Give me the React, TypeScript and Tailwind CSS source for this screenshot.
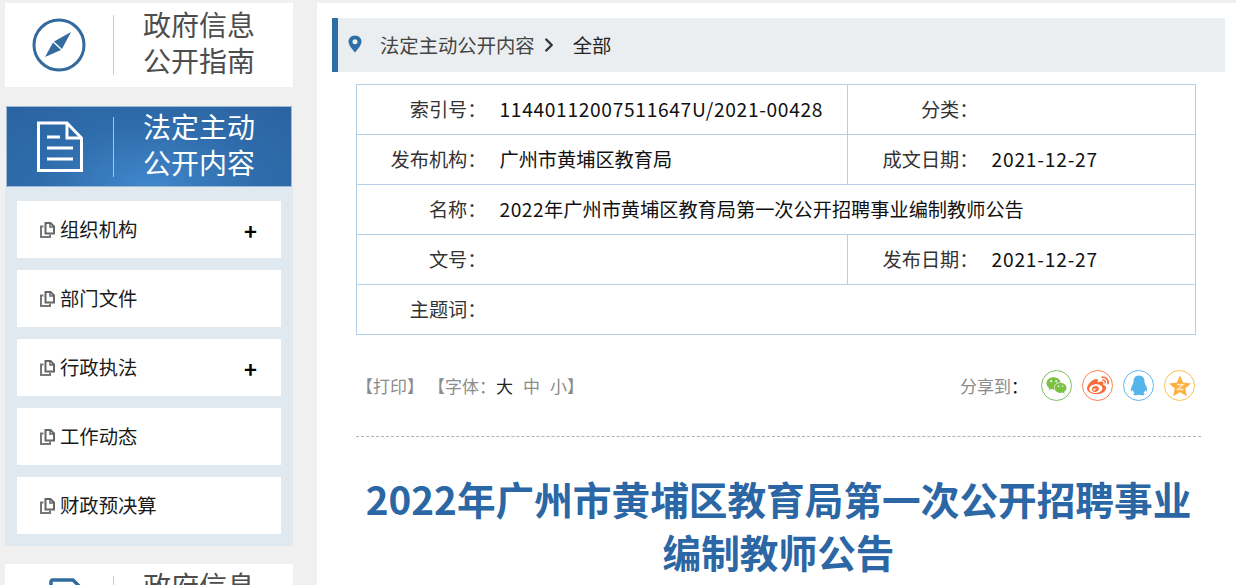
import { ChevronRight } from "lucide-react";
import { FaWeibo, FaWeixin } from "react-icons/fa";

const menu = [
  { name: "组织机构", plus: true },
  { name: "部门文件", plus: false },
  { name: "行政执法", plus: true },
  { name: "工作动态", plus: false },
  { name: "财政预决算", plus: false },
];

function CompassIcon() {
  return (
    <svg width="54" height="54" viewBox="0 0 54 54" fill="none">
      <circle cx="27" cy="27" r="25" stroke="#336b9e" strokeWidth="3" />
      <path d="M39 14 L30 31 L22 23.500 Z" fill="#336b9e" />
      <path d="M21 24.500 L29 32 L13 39 Z" fill="#336b9e" />
    </svg>
  );
}

function DocIcon() {
  return (
    <svg width="46" height="52" viewBox="0 0 46 52" fill="none" stroke="#fff" strokeWidth="3">
      <path d="M1.500 2 H30 L44.500 17 V49.500 H1.500 Z" />
      <path d="M30 2 V17 H44.500" />
      <path d="M10 16 H23 M10 27 H36 M10 38 H36" />
    </svg>
  );
}

function CatalogIcon() {
  return (
    <svg className="ml-[16px]" width="36" height="56" viewBox="0 0 36 56" fill="none" stroke="#336b9e" strokeWidth="3.500">
      <path d="M2 54 V4 Q2 2 4 2 H24 L36 14 V54 Z" />
    </svg>
  );
}

function CopyIcon() {
  return (
    <svg width="15" height="16" viewBox="0 0 15 16" fill="none" stroke="#666" strokeWidth="2">
      <path d="M5.500 1 H10.500 L14 4.500 V11.500 H5.500 Z" />
      <path d="M10 1 V5 H14" strokeWidth="1.500" />
      <path d="M3.500 4.500 H1 V15 H10 V12.500" stroke="#777" strokeWidth="2" />
    </svg>
  );
}

function QqIcon() {
  return (
    <svg width="18" height="21" viewBox="0 0 18 21" fill="#54b4ec">
      <path d="M9 0.500 C5 0.500 3.500 3.500 3.500 6.500 C3.500 7.500 3.300 8.200 3 9 C1.800 11 0.500 13.500 1 16 C1.300 16.800 2 16.200 2.800 15 C3.200 16.200 3.800 17.200 4.500 18 C3.300 18.500 3 19.500 4 20 C5.500 20.500 7.500 20.300 9 19.800 C10.500 20.300 12.500 20.500 14 20 C15 19.500 14.700 18.500 13.500 18 C14.200 17.200 14.800 16.200 15.200 15 C16 16.200 16.700 16.800 17 16 C17.500 13.500 16.200 11 15 9 C14.700 8.200 14.500 7.500 14.500 6.500 C14.500 3.500 13 0.500 9 0.500 Z" />
    </svg>
  );
}

function SideText({ top, bottom, color }: { top: string; bottom: string; color: string }) {
  return (
    <div className={`-mt-[6px] pl-[29px] text-[28px] leading-[36px] ${color}`}>
      <div>{top}</div>
      <div>{bottom}</div>
    </div>
  );
}

function Sidebar() {
  return (
    <aside className="w-[288px] shrink-0">
      <div className="flex h-[84px] items-center bg-white">
        <div className="flex w-[108px] shrink-0 justify-center">
          <CompassIcon />
        </div>
        <div className="h-[60px] w-px bg-[#cccccc]" />
        <SideText top="政府信息" bottom="公开指南" color="text-[#4d4d4d]" />
      </div>
      <div className="mx-px mt-[19px] flex h-[81px] items-center border border-[#9dbbd6] bg-[radial-gradient(ellipse_at_50%_100%,#4087cb_0%,#2f6cab_55%,#2b63a1_100%)]">
        <div className="flex w-[106px] shrink-0 justify-center">
          <DocIcon />
        </div>
        <div className="h-[60px] w-px bg-[#a9c3dd]" />
        <SideText top="法定主动" bottom="公开内容" color="text-white" />
      </div>
      <ul className="flex flex-col gap-[12px] bg-[#dfe9ef] px-[12px] pt-[14px] pb-[12px]">
        {menu.map((m) => (
          <li key={m.name} className="flex h-[57px] items-center bg-white pr-[24px] pl-[23px] text-[19.33px] text-[#1a1a1a]">
            <CopyIcon />
            <span className="ml-[5px] flex-1">{m.name}</span>
            {m.plus && <span className="text-[22px] leading-none font-bold text-black">+</span>}
          </li>
        ))}
      </ul>
      <div className="mt-[18px] flex h-[84px] items-center bg-white">
        <div className="flex w-[108px] shrink-0 justify-center">
          <CatalogIcon />
        </div>
        <div className="h-[60px] w-px bg-[#cccccc]" />
        <SideText top="政府信息" bottom="公开目录" color="text-[#4d4d4d]" />
      </div>
    </aside>
  );
}

function Label({ children, divider }: { children: React.ReactNode; divider?: boolean }) {
  return <td className={`pr-[13px] text-right text-[#333] ${divider ? "border-l border-[#b5d0e6]" : ""}`}>{children}</td>;
}

function InfoTable() {
  return (
    <table className="ml-[39px] w-[840px] table-fixed border-collapse border border-[#b5d0e6] text-[19.2px] text-[#111]">
      <colgroup>
        <col className="w-[143px]" />
        <col className="w-[348px]" />
        <col className="w-[144px]" />
        <col />
      </colgroup>
      <tbody className="[&>tr]:h-[50px] [&>tr]:border-b [&>tr]:border-[#b5d0e6]">
        <tr>
          <Label>索引号：</Label>
          <td className="tracking-[0.67px]">11440112007511647U/2021-00428</td>
          <Label divider>分类：</Label>
          <td />
        </tr>
        <tr>
          <Label>发布机构：</Label>
          <td>广州市黄埔区教育局</td>
          <Label divider>成文日期：</Label>
          <td className="tracking-[0.8px]">2021-12-27</td>
        </tr>
        <tr>
          <Label>名称：</Label>
          <td colSpan={3}>
            <span className="tracking-[0.5px]">2022</span>年广州市黄埔区教育局第一次公开招聘事业编制教师公告
          </td>
        </tr>
        <tr>
          <Label>文号：</Label>
          <td />
          <Label divider>发布日期：</Label>
          <td className="tracking-[0.8px]">2021-12-27</td>
        </tr>
        <tr>
          <Label>主题词：</Label>
          <td colSpan={3} />
        </tr>
      </tbody>
    </table>
  );
}

function ShareIcon({ border, children }: { border: string; children: React.ReactNode }) {
  return <span className={`flex h-[31px] w-[31px] items-center justify-center rounded-full border ${border}`}>{children}</span>;
}

function Toolbar() {
  return (
    <div className="ml-[39px] flex h-[102px] w-[845px] items-center justify-between border-b border-dashed border-[#b3b3b3] pr-[6px] text-[17px] text-[#8c8c8c]">
      <div className="flex items-center">
        <span>【打印】</span>
        <span className="ml-[4px]">【字体：</span>
        <span className="text-[#222]">大</span>
        <span className="ml-[10px]">中</span>
        <span className="ml-[10px]">小</span>
        <span>】</span>
      </div>
      <div className="flex items-center">
        <span>分享到</span>
        <span className="mr-[13px] text-[#111]">：</span>
        <div className="flex gap-[10px]">
          <ShareIcon border="border-[#7cc35b]">
            <FaWeixin className="text-[21px] text-[#7cc044]" />
          </ShareIcon>
          <ShareIcon border="border-[#ff7f50]">
            <FaWeibo className="text-[22px] text-[#f76b38]" />
          </ShareIcon>
          <ShareIcon border="border-[#5fb8ec]">
            <QqIcon />
          </ShareIcon>
          <ShareIcon border="border-[#fbbf55]">
            <svg width="24" height="24" viewBox="0 0 24 24" fill="#fbb040">
              <path d="M12 1.500 L15.200 8.600 L23 9.400 L17.200 14.600 L18.900 22.300 L12 18.300 L5.100 22.300 L6.800 14.600 L1 9.400 L8.800 8.600 Z" />
              <path d="M9 10.500 H15 L9.500 15.500 H15.500" fill="none" stroke="#fde6c0" strokeWidth="1.500" />
            </svg>
          </ShareIcon>
        </div>
      </div>
    </div>
  );
}

export default function App() {
  return (
    <div className="flex h-[585px] w-[1236px] overflow-hidden bg-[#f0f0f0] pt-[3px] pl-[5px] [font-family:'Noto_Sans_CJK_SC','Noto_Sans',sans-serif]">
      <Sidebar />
      <main className="ml-[24px] flex-1 bg-white pt-[15px]">
        <div className="mr-[11px] mb-[12px] ml-[15px] flex h-[54px] items-center border-l-[6px] border-[#2f6ea5] bg-[#ebeef1] text-[19.33px]">
          <svg className="mb-[2px] ml-[10px]" width="14" height="18" viewBox="0 0 14 18" fill="#2f6ea5">
            <path fillRule="evenodd" d="M7 0.500 C3.300 0.500 0.500 3.300 0.500 6.800 C0.500 10.800 7 17.500 7 17.500 C7 17.500 13.500 10.800 13.500 6.800 C13.500 3.300 10.700 0.500 7 0.500 Z M7 4.300 A2.500 2.500 0 1 1 7 9.300 A2.500 2.500 0 1 1 7 4.300 Z" />
          </svg>
          <span className="ml-[18px] text-[#444]">法定主动公开内容</span>
          <ChevronRight className="ml-[3px] h-[22px] w-[22px] text-[#333]" strokeWidth={2.600} />
          <span className="ml-[13px] text-[#222]">全部</span>
        </div>
        <InfoTable />
        <Toolbar />
        <h1 className="mt-[35px] ml-[39px] w-[845px] text-center text-[38.67px] leading-[53px] font-bold text-[#2b66a5]">
          <span>2022</span>年广州市黄埔区教育局第一次公开招聘事业编制教师公告
        </h1>
      </main>
    </div>
  );
}
